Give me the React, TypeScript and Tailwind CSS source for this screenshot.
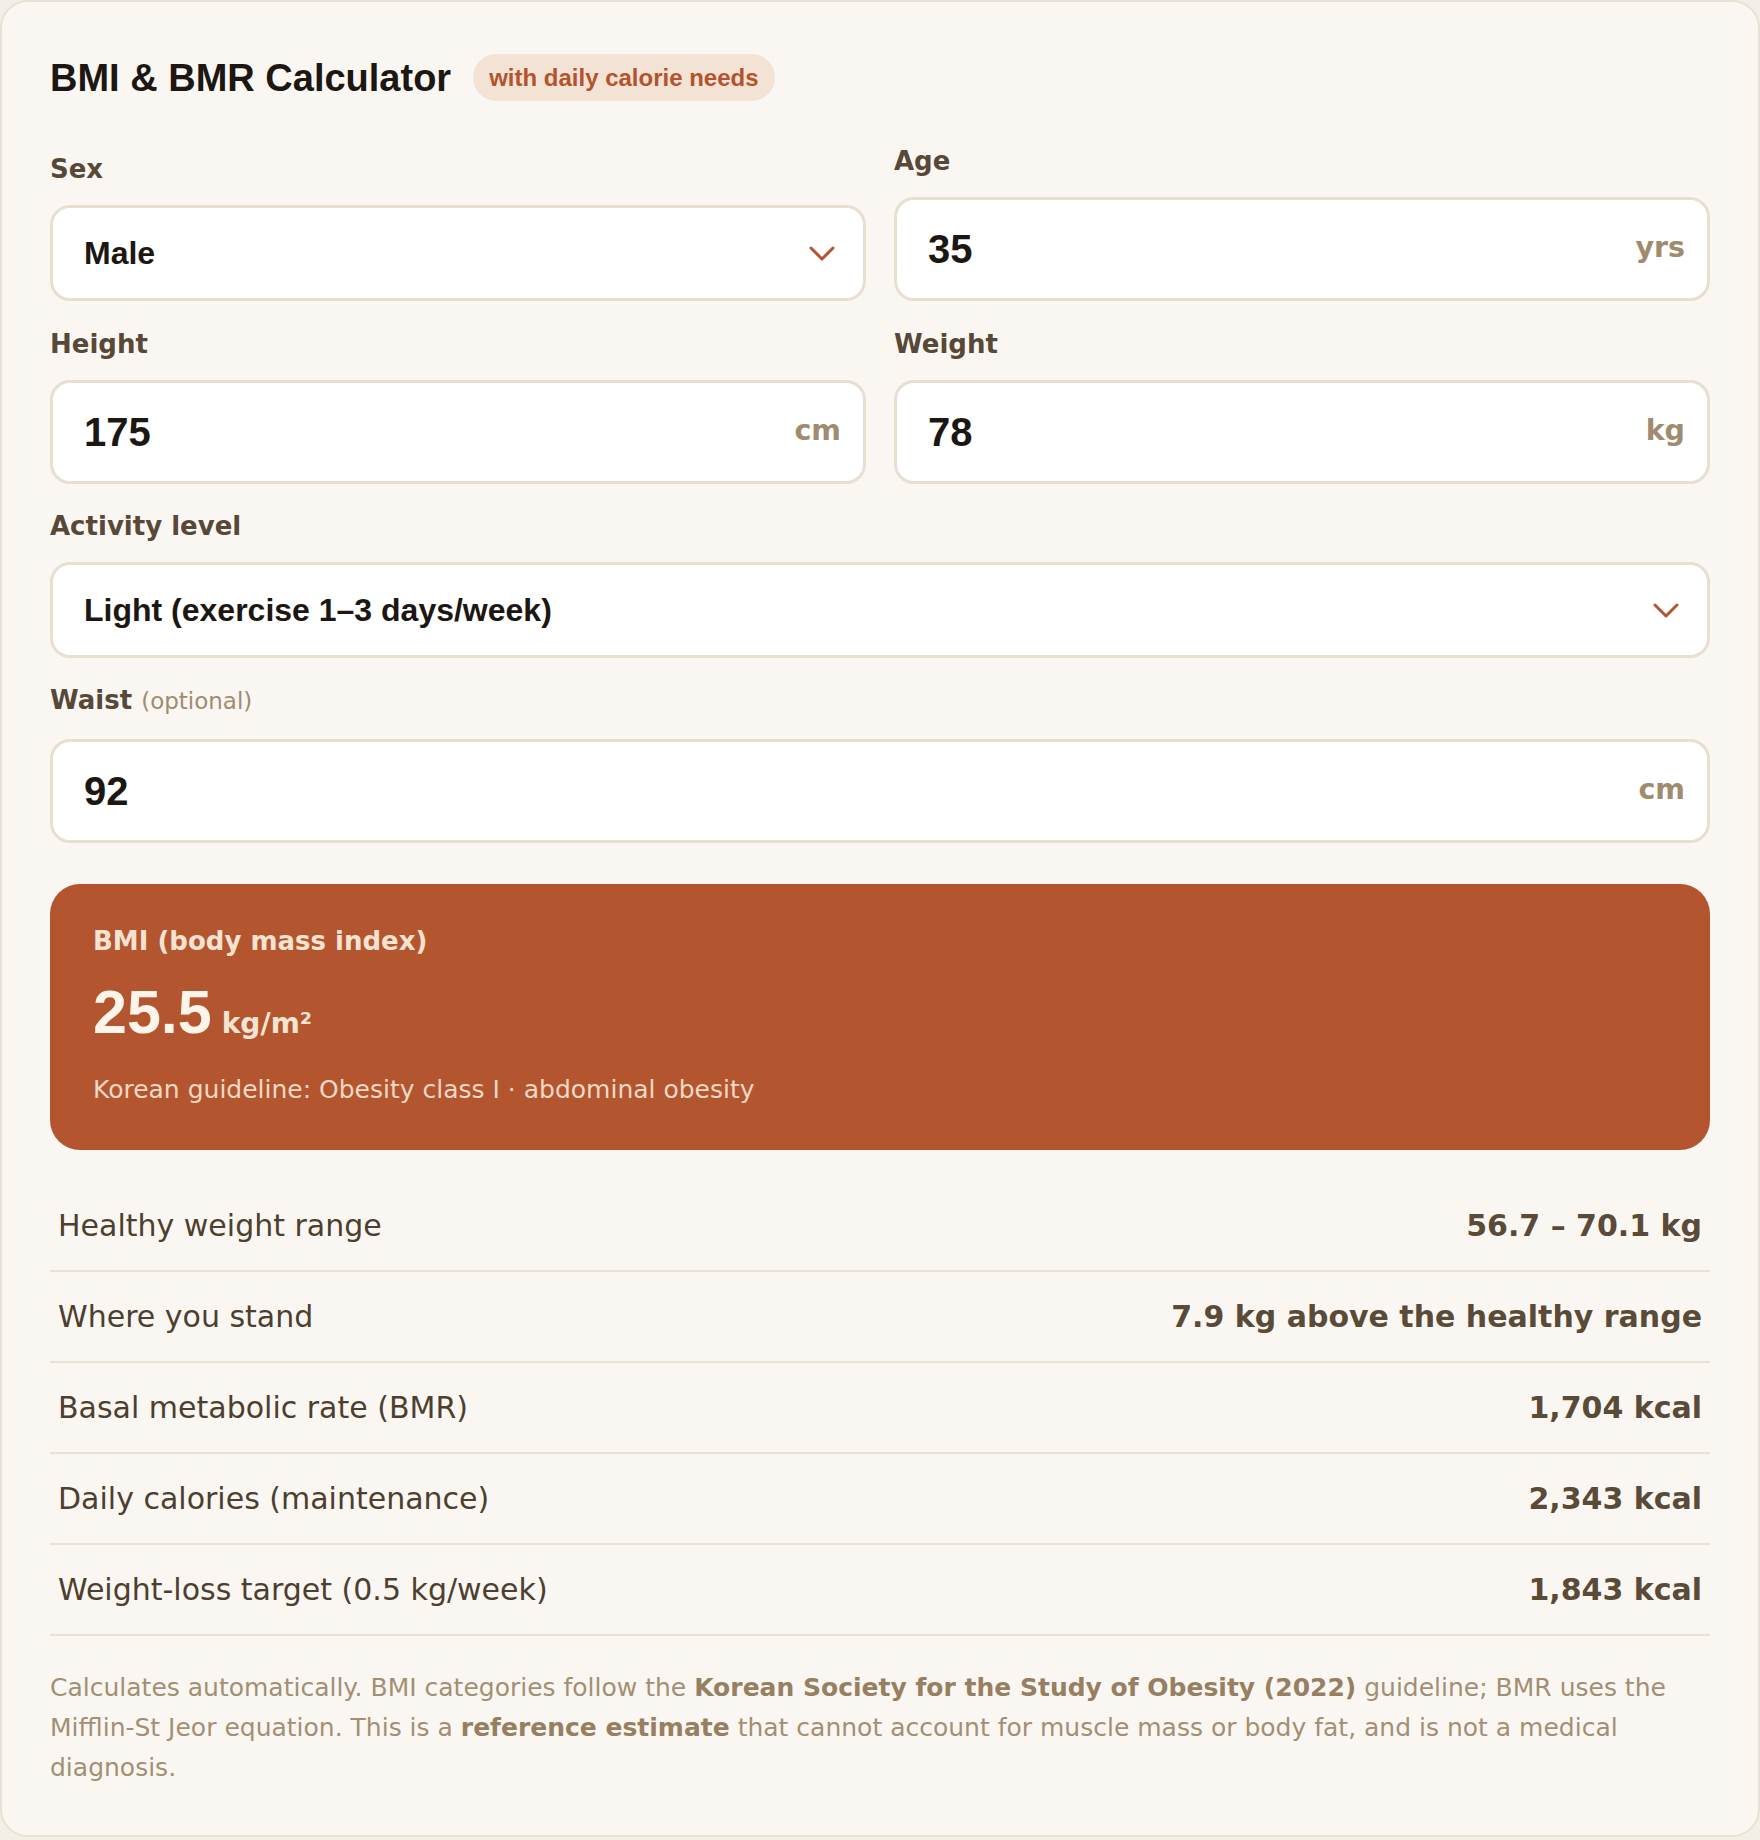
import React from "react";

const DV = "font-['DejaVu_Sans','Noto_Sans',sans-serif]";
const AR = "font-['Liberation_Sans',Arial,sans-serif]";

function Label({ children }: { children: React.ReactNode }) {
  return (
    <div className={`${DV} mb-[20px] text-[26px] font-bold leading-[31px] text-[#574837]`}>
      {children}
    </div>
  );
}

function Chevron() {
  return (
    <svg width="26" height="15" viewBox="0 0 26 15" fill="none" className="shrink-0">
      <path d="M2 2 L13 13 L24 2" stroke="#b35630" strokeWidth="3" strokeLinecap="round" strokeLinejoin="round" />
    </svg>
  );
}

function SelectBox({ value }: { value: string }) {
  return (
    <div className="flex h-[96px] items-center justify-between rounded-[20px] border-[3px] border-[#e8dfd1] bg-white pl-[31px] pr-[28px]">
      <span className={`${AR} text-[32px] font-bold leading-[37px] text-[#1c1712]`}>{value}</span>
      <Chevron />
    </div>
  );
}

function InputBox({ value, unit }: { value: string; unit: string }) {
  return (
    <div className="flex h-[104px] items-center justify-between rounded-[20px] border-[3px] border-[#e8dfd1] bg-white pl-[31px] pr-[22px]">
      <span className={`${AR} text-[40px] font-bold leading-[46px] text-[#1c1712]`}>{value}</span>
      <span className={`${DV} mb-[4px] text-[28.5px] font-bold leading-[33px] text-[#a08b6f]`}>{unit}</span>
    </div>
  );
}

function Row({ label, value }: { label: string; value: string }) {
  return (
    <div className={`${DV} flex items-center justify-between border-b-2 border-[#e9e3d6] px-[8px] py-[27px] text-[30px] leading-[35px]`}>
      <span className="text-[#4d3f30]">{label}</span>
      <span className="font-bold text-[#5a4a38]">{value}</span>
    </div>
  );
}

export default function App() {
  return (
    <div className="min-h-screen bg-[#f3eee6]">
      <div className="rounded-[28px] border-2 border-[#e8e1d5] bg-[#faf7f2] px-[48px] pt-[52px] pb-[47px]">
        <div className="flex items-center gap-[22px]">
          <h1 className={`${AR} text-[38px] font-bold leading-[44px] text-[#1c1712]`}>BMI &amp; BMR Calculator</h1>
          <span className={`${AR} rounded-full bg-[#f3e3d5] px-4 py-[10px] text-[24px] font-bold leading-[27px] text-[#b4532d]`}>
            with daily calorie needs
          </span>
        </div>

        <div className="mt-[45px] grid grid-cols-2 items-end gap-x-[28px] gap-y-[28px]">
          <div>
            <Label>Sex</Label>
            <SelectBox value="Male" />
          </div>
          <div>
            <Label>Age</Label>
            <InputBox value="35" unit="yrs" />
          </div>
          <div>
            <Label>Height</Label>
            <InputBox value="175" unit="cm" />
          </div>
          <div>
            <Label>Weight</Label>
            <InputBox value="78" unit="kg" />
          </div>
        </div>

        <div className="mt-[27px]">
          <Label>Activity level</Label>
          <SelectBox value="Light (exercise 1–3 days/week)" />
        </div>

        <div className="mt-[27px]">
          <div className={`${DV} mb-[22px] text-[26px] font-bold leading-[31px] text-[#574837]`}>
            Waist <span className="text-[23px] font-normal text-[#a08b6f]">(optional)</span>
          </div>
          <InputBox value="92" unit="cm" />
        </div>

        <div className="mt-[41px] rounded-[30px] bg-[#b35630] px-[43px] pt-[42px] pb-[46px]">
          <div className={`${DV} text-[26px] font-bold leading-[30px] text-[#f6e2d0]`}>BMI (body mass index)</div>
          <div className="mt-[23px] flex items-baseline">
            <span className={`${AR} text-[61px] font-bold leading-[67px] text-[#fdf4ea]`}>25.5</span>
            <span className={`${DV} ml-[10px] text-[28px] font-bold text-[#f6e4d2]`}>kg/m²</span>
          </div>
          <div className={`${DV} mt-[29px] text-[25px] leading-[29px] text-[#f2d8c5]`}>
            Korean guideline: Obesity class I · abdominal obesity
          </div>
        </div>

        <div className="mt-[31px]">
          <Row label="Healthy weight range" value="56.7 – 70.1 kg" />
          <Row label="Where you stand" value="7.9 kg above the healthy range" />
          <Row label="Basal metabolic rate (BMR)" value="1,704 kcal" />
          <Row label="Daily calories (maintenance)" value="2,343 kcal" />
          <Row label="Weight-loss target (0.5 kg/week)" value="1,843 kcal" />
        </div>

        <p className={`${DV} mt-[32px] text-[25px] leading-[40px] text-[#a38f74]`}>
          Calculates automatically. BMI categories follow the{" "}
          <strong className="font-bold text-[#977f62]">Korean Society for the Study of Obesity (2022)</strong> guideline; BMR
          uses the Mifflin-St Jeor equation. This is a{" "}
          <strong className="font-bold text-[#977f62]">reference estimate</strong> that cannot account for muscle mass or
          body fat, and is not a medical diagnosis.
        </p>
      </div>
    </div>
  );
}
